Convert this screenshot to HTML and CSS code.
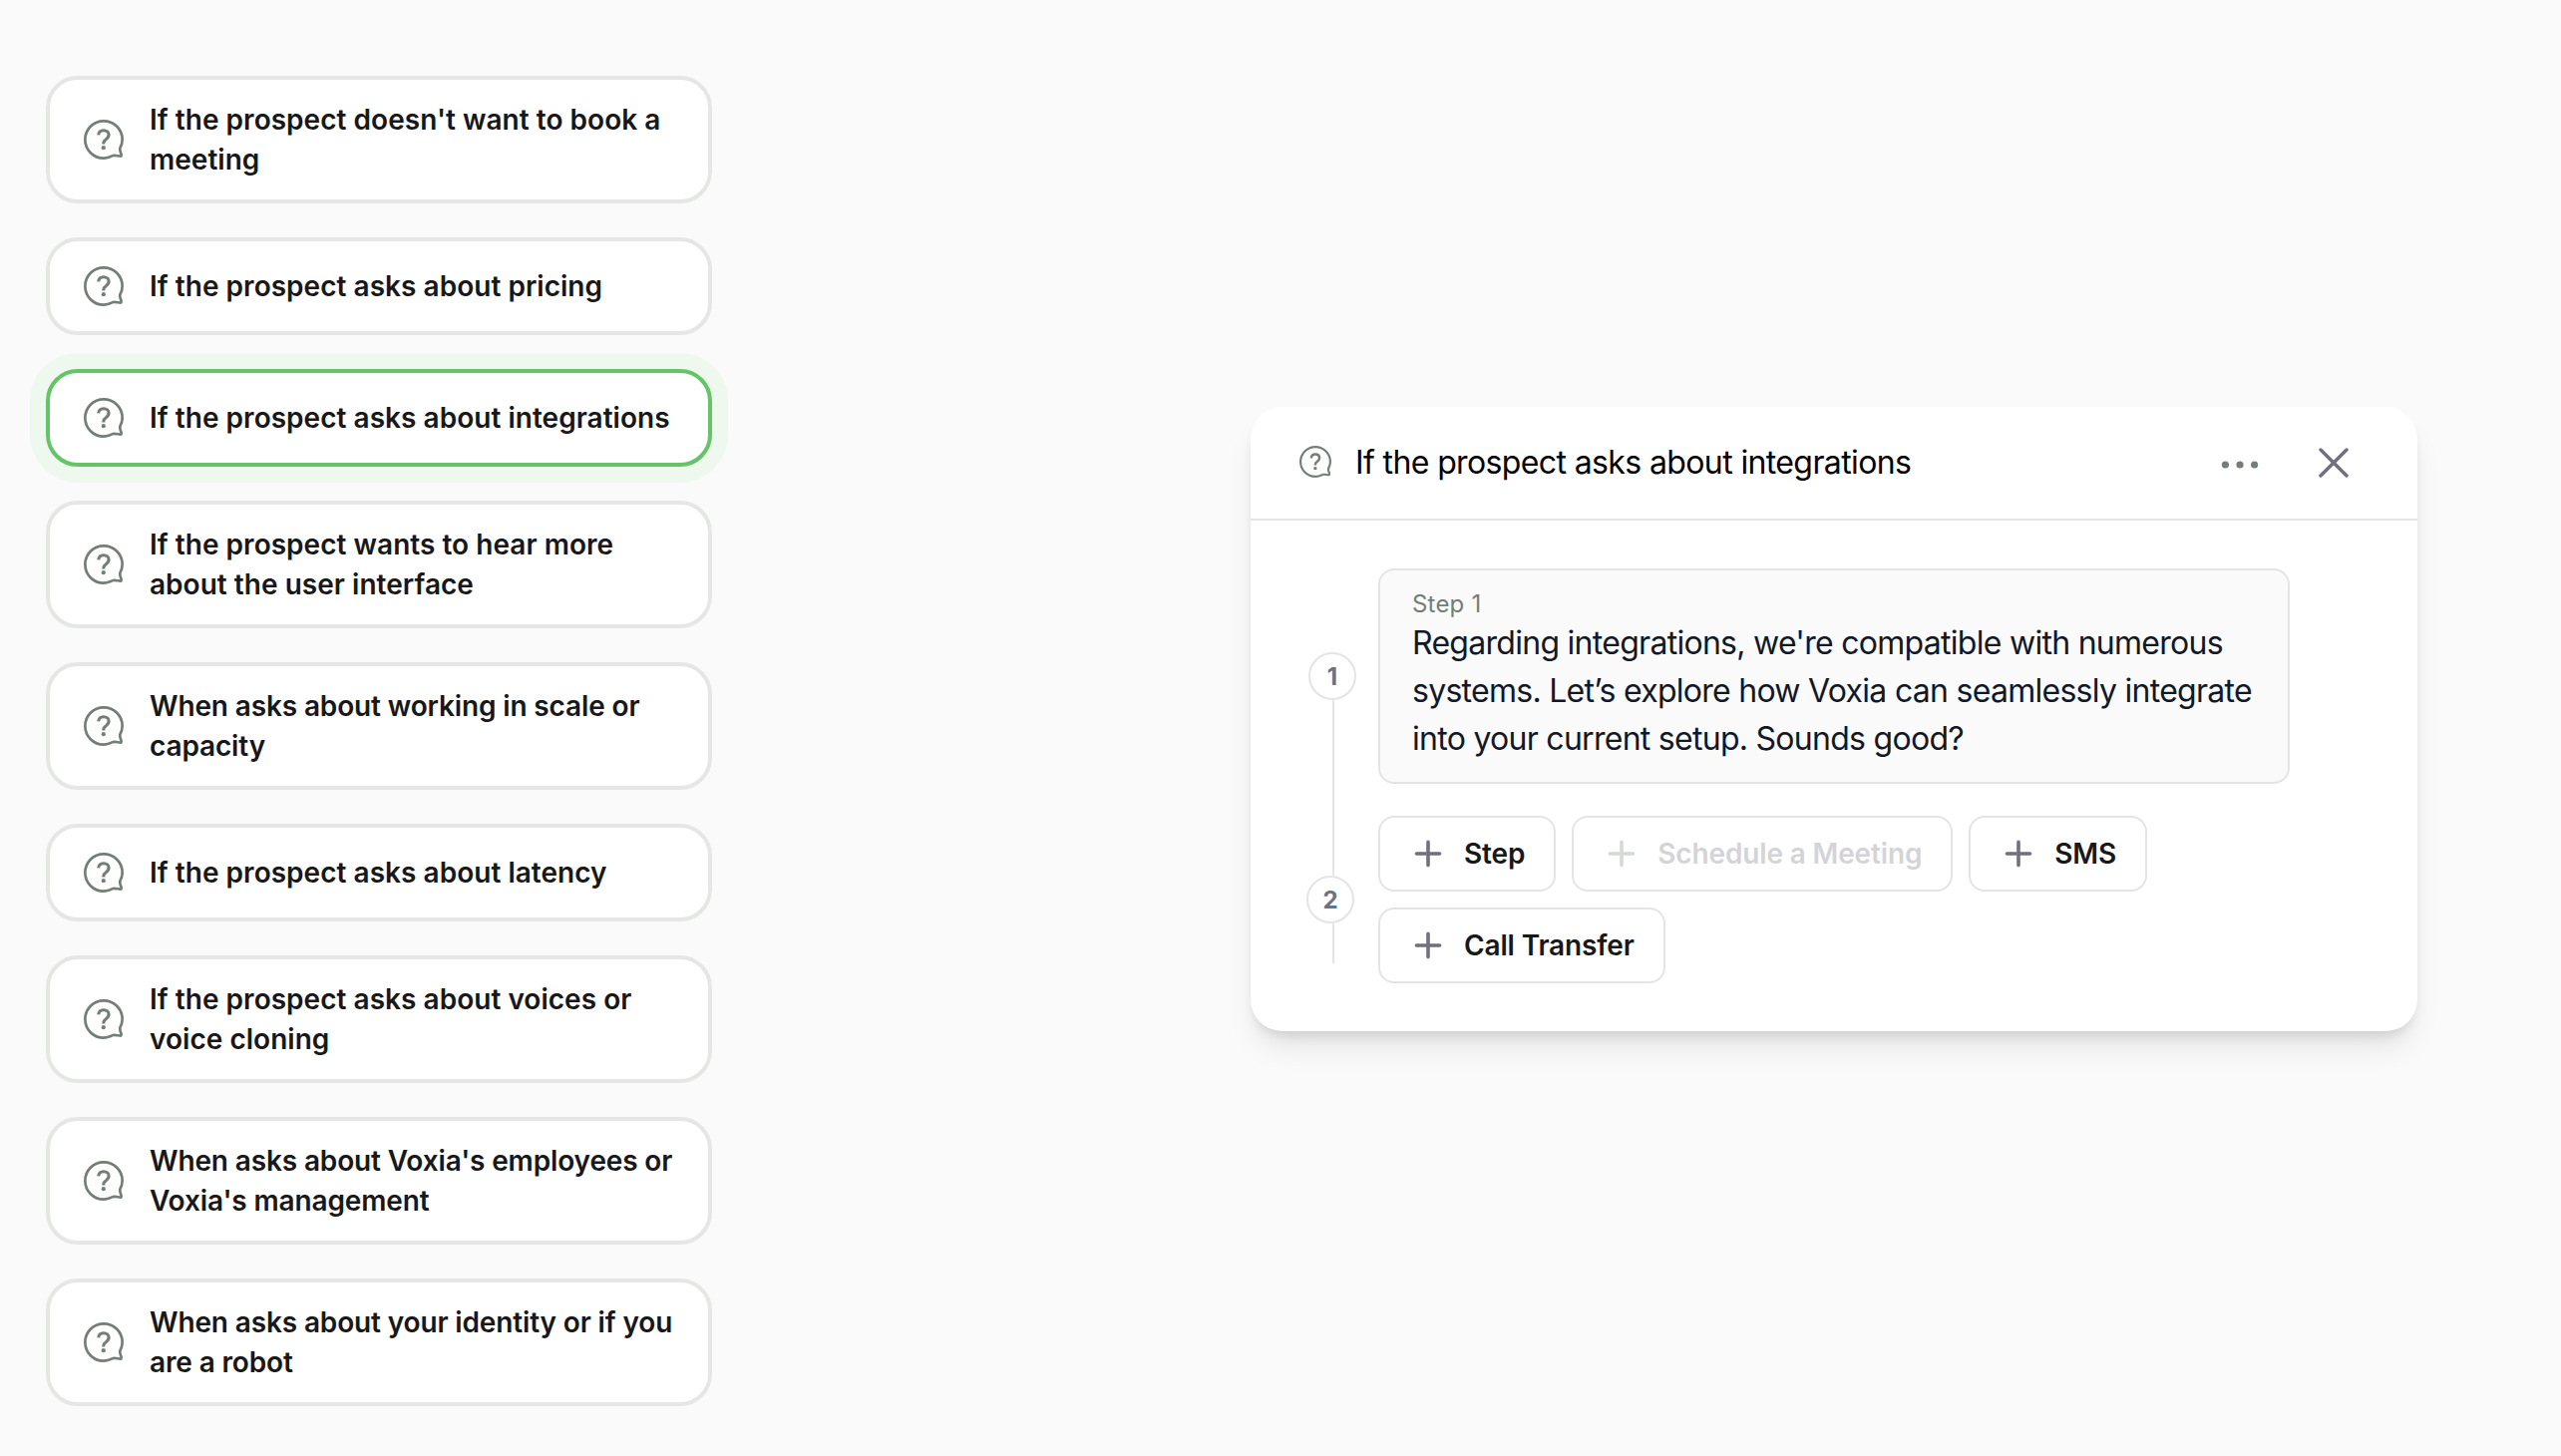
FILE: index.html
```html
<!DOCTYPE html>
<html lang="en">
<head>
<meta charset="utf-8">
<title>Scenarios</title>
<link rel="stylesheet" href="styles.css">
</head>
<body>
<svg class="sprite" aria-hidden="true">
  <symbol id="question" viewBox="0 0 40 40">
    <path d="M38.65 20A18.65 18.65 0 1 0 20 38.65C23.5 38.65 26.4 37.3 29.3 36C32 35.6 34.8 36.6 37 36.6C37.9 36.4 37.7 35.6 37.5 34.5C36.6 32.3 35.9 30.4 36.3 28.6C37.9 25.7 38.65 23 38.65 20Z" fill="none" stroke="currentColor" stroke-width="2.7" stroke-linejoin="round"/>
    <path d="M14.7 15.4C15 12.4 17.1 10.7 19.9 10.7C22.9 10.7 25.1 12.4 25.1 15.1C25.1 17.3 24 18.5 22.3 19.7C20.5 20.9 19.8 21.8 19.8 23.6V24.4" fill="none" stroke="currentColor" stroke-width="3.1"/>
    <circle cx="19.8" cy="28.2" r="2.1" fill="currentColor"/>
  </symbol>
  <symbol id="plus" viewBox="0 0 28 28">
    <path d="M14 2.4V25.6M2.4 14H25.6" fill="none" stroke="currentColor" stroke-width="3.6" stroke-linecap="round"/>
  </symbol>
</svg>
<main class="board">
  <nav class="scenarios">
    <a class="scenario"><svg class="scenario-icon"><use href="#question"/></svg><span>If the prospect doesn't want to book a meeting</span></a>
    <a class="scenario"><svg class="scenario-icon"><use href="#question"/></svg><span>If the prospect asks about pricing</span></a>
    <a class="scenario is-active"><svg class="scenario-icon"><use href="#question"/></svg><span>If the prospect asks about integrations</span></a>
    <a class="scenario"><svg class="scenario-icon"><use href="#question"/></svg><span>If the prospect wants to hear more about the user interface</span></a>
    <a class="scenario is-tight"><svg class="scenario-icon"><use href="#question"/></svg><span>When asks about working in scale or capacity</span></a>
    <a class="scenario"><svg class="scenario-icon"><use href="#question"/></svg><span>If the prospect asks about latency</span></a>
    <a class="scenario"><svg class="scenario-icon"><use href="#question"/></svg><span>If the prospect asks about voices or voice cloning</span></a>
    <a class="scenario is-tight"><svg class="scenario-icon"><use href="#question"/></svg><span>When asks about Voxia's employees or Voxia's management</span></a>
    <a class="scenario is-tight"><svg class="scenario-icon"><use href="#question"/></svg><span>When asks about your identity or if you are a robot</span></a>
  </nav>
  <section class="panel">
    <header class="panel-header">
      <svg class="panel-icon"><use href="#question"/></svg>
      <h1 class="panel-title">If the prospect asks about integrations</h1>
      <svg class="more" viewBox="0 0 38 8"><circle cx="4.4" cy="4" r="3.6"/><circle cx="19" cy="4" r="3.6"/><circle cx="33.6" cy="4" r="3.6"/></svg>
      <svg class="close" viewBox="0 0 30 30"><path d="M2 2L28 28M28 2L2 28"/></svg>
    </header>
    <div class="panel-body">
      <div class="timeline">
        <span class="marker">1</span>
        <span class="rail"></span>
        <span class="marker marker-next">2</span>
        <span class="rail-end"></span>
      </div>
      <div class="steps">
        <article class="step">
          <p class="step-label">Step 1</p>
          <p class="step-text">Regarding integrations, we're compatible with numerous systems. Let’s explore how Voxia can seamlessly integrate into your current setup. Sounds good?</p>
        </article>
        <div class="actions">
          <button class="action"><svg class="plus"><use href="#plus"/></svg>Step</button>
          <button class="action" disabled><svg class="plus"><use href="#plus"/></svg>Schedule a Meeting</button>
          <button class="action"><svg class="plus"><use href="#plus"/></svg>SMS</button>
          <button class="action"><svg class="plus"><use href="#plus"/></svg>Call Transfer</button>
        </div>
      </div>
    </div>
  </section>
</main>
</body>
</html>
```
FILE: styles.css
```css
* { box-sizing: border-box; }
body {
  margin: 0;
  background: #fafafa;
  color: #18181b;
  font-family: Inter, "Liberation Sans", sans-serif;
}
.sprite { display: none; }
.board {
  display: flex;
  justify-content: space-between;
  align-items: flex-start;
  height: 1460px;
  padding: 76px 144px 0 46px;
}
.scenarios {
  display: flex;
  flex-direction: column;
  gap: 34px;
  width: 668px;
}
.scenario {
  display: flex;
  align-items: center;
  gap: 26px;
  min-height: 98px;
  padding: 20px 30px 20px 34px;
  border: 4px solid #e5e7e5;
  border-radius: 32px;
  background: #fff;
  font-size: 28px;
  font-weight: 600;
  letter-spacing: 0.03px;
  line-height: 40px;
}
.scenario.is-tight { letter-spacing: -0.14px; }
.scenario.is-active {
  border-color: #64c466;
  box-shadow: 0 0 0 16px #eff8ef;
}
.scenario-icon { flex: none; width: 40px; height: 40px; color: #737f76; }
.panel {
  width: 1170px;
  height: 626px;
  margin-top: 332px;
  border-radius: 32px;
  background: #fff;
  box-shadow: 0 20px 30px -6px rgba(0, 0, 0, 0.1), 0 8px 12px -4px rgba(0, 0, 0, 0.1);
}
.panel-header {
  display: flex;
  align-items: center;
  height: 114px;
  padding: 0 69px 2px 49px;
  border-bottom: 2px solid #e4e4e9;
}
.panel-icon { width: 32px; height: 32px; color: #737f76; }
.panel-title {
  flex: 1;
  margin: 0 0 0 24px;
  color: #000;
  font-size: 32px;
  font-weight: 400;
  letter-spacing: -0.62px;
}
.more { width: 38px; height: 8px; margin: 5px 60px 0 0; fill: #737f76; }
.close { width: 30px; height: 30px; margin-top: 1px; fill: none; stroke: #72707d; stroke-width: 3.5; stroke-linecap: round; }
.panel-body {
  display: flex;
  padding: 48px 128px 0 56px;
}
.timeline {
  display: flex;
  flex: none;
  flex-direction: column;
  align-items: center;
  width: 52px;
  margin-right: 20px;
  padding: 84px 0 0 2px;
}
.marker {
  display: flex;
  align-items: center;
  justify-content: center;
  width: 48px;
  height: 48px;
  margin-right: 2px;
  border: 2px solid #e4e4e4;
  border-radius: 50%;
  color: #6b7280;
  font-size: 24px;
  font-weight: 700;
}
.marker-next { margin-right: 6px; }
.rail, .rail-end { width: 2px; background: #e4e4e4; }
.rail { height: 176px; }
.rail-end { height: 40px; }
.steps { flex: 1; }
.step {
  height: 216px;
  padding: 19px 30px 0 32px;
  border: 2px solid #e4e4e4;
  border-radius: 16px;
  background: #fafafa;
}
.step-label, .step-text { margin: 0; }
.step-label { color: #737f76; font-size: 24px; letter-spacing: 0.2px; line-height: 30px; }
.step-text { color: #111827; font-size: 32px; font-weight: 400; letter-spacing: -0.72px; line-height: 48px; }
.actions {
  display: flex;
  flex-wrap: wrap;
  gap: 16px;
  margin-top: 32px;
}
.action {
  display: flex;
  align-items: center;
  gap: 22px;
  height: 76px;
  padding: 0 29px 0 34px;
  border: 2px solid #e4e4e4;
  border-radius: 16px;
  background: #fff;
  color: #18181b;
  font: 600 28px/40px Inter, "Liberation Sans", sans-serif;
  letter-spacing: -0.15px;
}
.plus { width: 28px; height: 28px; color: #72707d; }
.action:disabled { color: #d4d4d8; }
.action:disabled .plus { color: #d5d9d5; }
```
